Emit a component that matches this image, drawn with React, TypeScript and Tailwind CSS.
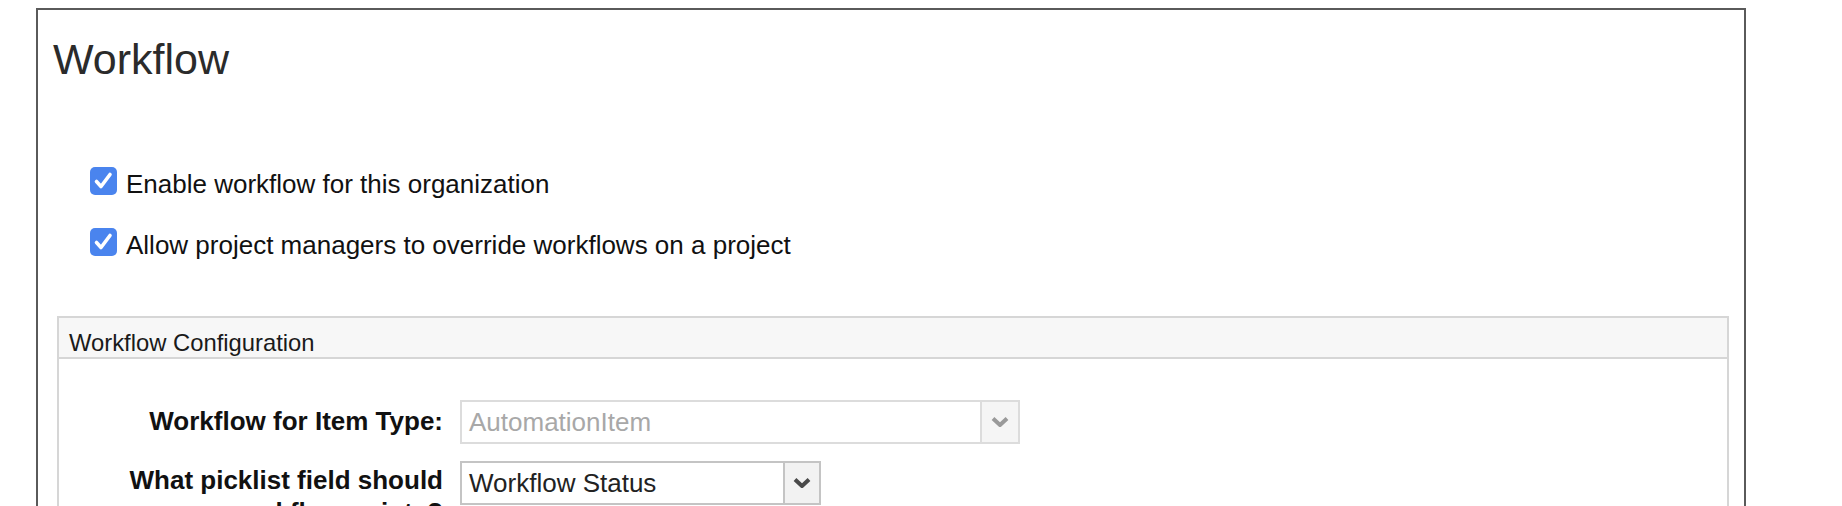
import React from "react";

function Check() {
  return (
    <span className="flex h-[28px] w-[27px] shrink-0 items-center justify-center rounded-[5px] bg-[#4a84ee]">
      <svg width="27" height="28" viewBox="0 0 27 28" fill="none">
        <path d="M6.5 14.5 L11 19.5 L20 7.5" stroke="#ffffff" strokeWidth="3.6" strokeLinecap="round" strokeLinejoin="round" />
      </svg>
    </span>
  );
}

function Chevron({ color }: { color: string }) {
  return (
    <svg width="18" height="12" viewBox="0 0 18 12" fill="none">
      <path d="M2 2.5 L9 9 L16 2.5" stroke={color} strokeWidth="4" strokeLinejoin="round" />
    </svg>
  );
}

export default function App() {
  return (
    <div className="h-[506px] w-full overflow-hidden bg-white font-['Liberation_Sans',Arial,sans-serif] text-[#1a1a1a]">
      <div className="ml-[36px] mt-[8px] h-[700px] w-[1710px] border-2 border-[#5a5a5a] pl-[15px] pt-[25px]">
        <h1 className="text-[43px] leading-[48px] font-normal text-[#2b2b2b]">Workflow</h1>

        <div className="ml-[37px] mt-[84px] flex flex-col gap-[29px]">
          <div className="flex items-start gap-[9px]">
            <Check />
            <span className="mt-[2px] text-[26px] leading-[30px] text-[#111]">Enable workflow for this organization</span>
          </div>
          <div className="flex items-start gap-[9px]">
            <Check />
            <span className="mt-[2px] text-[26px] leading-[30px] text-[#111]">Allow project managers to override workflows on a project</span>
          </div>
        </div>

        <div className="ml-[4px] mt-[56px] w-[1672px] border-2 border-[#d6d6d6]">
          <div className="h-[41px] border-b-2 border-[#d6d6d6] bg-[#f7f7f7] pl-[10px] pt-[11px]">
            <div className="text-[23.8px] leading-[27px] text-[#1a1a1a]">Workflow Configuration</div>
          </div>
          <div className="grid grid-cols-[384px_1fr] gap-x-[17px] gap-y-[17px] pt-[41px]">
            <div className="pt-[6px] text-right text-[26px] font-bold leading-[30px] text-[#111]">Workflow for Item Type:</div>
            <div className="flex h-[44px] w-[560px] border-2 border-[#dcdcdc]">
              <div className="flex flex-1 items-center pl-[7px] text-[26px] leading-[30px] text-[#a8a8a8]">AutomationItem</div>
              <div className="flex w-[38px] items-center justify-center border-l-2 border-[#dcdcdc] bg-[#f5f5f5]">
                <Chevron color="#9a9a9a" />
              </div>
            </div>

            <div className="pt-[3px] text-right text-[26px] font-bold leading-[32px] text-[#111]">
              What picklist field should
              <br />
              use as workflow points?
            </div>
            <div className="flex h-[44px] w-[361px] border-2 border-[#c4c4c4]">
              <div className="flex flex-1 items-center pl-[7px] text-[26px] leading-[30px] text-[#222]">Workflow Status</div>
              <div className="flex w-[36px] items-center justify-center border-l-2 border-[#c4c4c4] bg-[#f2f2f2]">
                <Chevron color="#4a4a4a" />
              </div>
            </div>
          </div>
        </div>
      </div>
    </div>
  );
}
